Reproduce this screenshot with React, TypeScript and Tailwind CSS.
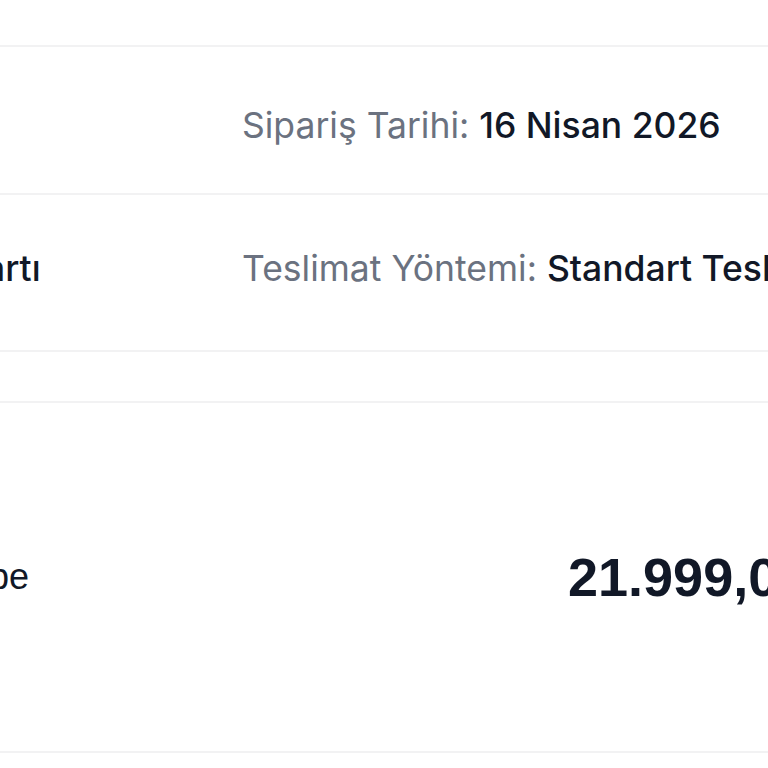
const rowBorder = "border-b-2 border-[#f2f2f3]";

export default function App() {
  return (
    <div className="h-[768px] w-[768px] overflow-hidden bg-white font-['Inter','Noto_Sans',sans-serif]">
      <div className="-ml-[160px] w-[1200px]">
        {/* top row (cut) */}
        <div className={`h-[47px] ${rowBorder}`} />

        {/* Sipariş Tarihi */}
        <div className={`flex h-[148px] items-center ${rowBorder}`}>
          <div className="w-[402px] shrink-0" />
          <div className="whitespace-nowrap pt-[12px] text-[35.5px]">
            <span className="text-[#6b7280]">Sipariş Tarihi: </span>
            <span className="font-medium text-[#111827]">16 Nisan 2026</span>
          </div>
        </div>

        {/* Ödeme / Teslimat */}
        <div className={`flex h-[157px] items-center ${rowBorder}`}>
          <div className="w-[402px] shrink-0 whitespace-nowrap pb-[8px] pl-[22px] text-[35.5px] font-medium text-[#111827]">
            Kredi Kartı
          </div>
          <div className="whitespace-nowrap pb-[8px] text-[35.5px]">
            <span className="text-[#6b7280]">Teslimat Yöntemi: </span>
            <span className="font-medium text-[#111827]">Standart Teslimat</span>
          </div>
        </div>

        {/* empty row */}
        <div className={`h-[51px] ${rowBorder}`} />

        {/* Ürün satırı */}
        <div className={`flex h-[350px] items-center font-['Liberation_Sans',Arial,sans-serif] ${rowBorder}`}>
          <div className="w-[728px] shrink-0 whitespace-nowrap pl-[33px] text-[36px] text-[#111827]">
            Ürün Tipe
          </div>
          <div className="whitespace-nowrap text-[54px] font-semibold text-[#111827]">21.999,00 ₺</div>
        </div>
      </div>
    </div>
  );
}
